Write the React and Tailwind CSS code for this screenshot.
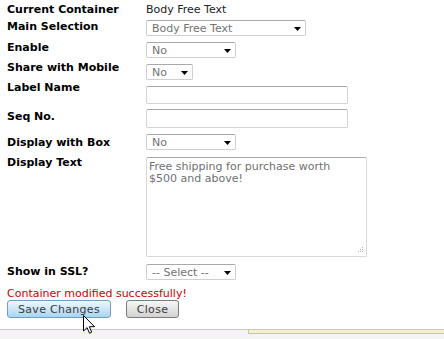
import React from 'react';

const Arrow = () => (
  <svg width="7" height="4" viewBox="0 0 7 4" className="shrink-0 mt-[2px]">
    <path d="M0 0h7L3.5 4z" fill="#000" />
  </svg>
);

const FakeSelect = ({ value, width }) => (
  <div
    className={`box-border h-[16px] ${width} flex items-center justify-between pl-[5px] pr-[4px] bg-white rounded-[2px] border border-[#cfcfcf] border-t-[#a9a9a9] text-[#737373] text-[11px] leading-[14px]`}
  >
    <span className="pt-[2px] whitespace-nowrap">{value}</span>
    <Arrow />
  </div>
);

const TextBox = ({ h }) => (
  <div className={`box-border w-[202px] ${h} bg-white rounded-[2px] border border-[#d4d4d4] border-t-[#a9a9a9]`} />
);

const Row = ({ label, h, lp, cp, children }) => (
  <div className={`flex ${h}`}>
    <div className={`w-[139px] shrink-0 font-bold text-black leading-[16px] ${lp}`}>{label}</div>
    <div className={cp}>{children}</div>
  </div>
);

const Grip = () => (
  <svg width="6" height="6" viewBox="0 0 6 6" className="absolute right-[3px] bottom-[3px]">
    <g fill="#b5b5b5">
      <rect x="5" y="0" width="1" height="1" />
      <rect x="3" y="2" width="1" height="1" />
      <rect x="5" y="2" width="1" height="1" />
      <rect x="1" y="4" width="1" height="1" />
      <rect x="3" y="4" width="1" height="1" />
      <rect x="5" y="4" width="1" height="1" />
    </g>
  </svg>
);

const Cursor = () => (
  <svg width="12" height="19" viewBox="0 0 12 19" className="absolute left-[83px] top-[315px]">
    <path
      d="M0.5 0.5v15.5l3.6-3.4 2.4 5.6 2.2-1-2.4-5.5h5.2z"
      fill="#fff"
      stroke="#000"
      strokeWidth="1"
      strokeLinejoin="miter"
    />
  </svg>
);

export default function App() {
  return (
    <div className="relative w-[444px] h-[339px] overflow-hidden bg-white text-[11px] font-['DejaVu_Sans','Verdana',sans-serif]">
      <div className="pl-[7px]">
        <Row label="Current Container" h="h-[18px]" lp="pt-[2px]" cp="pt-[2px] leading-[16px] text-[#222]">
          Body Free Text
        </Row>
        <Row label="Main Selection" h="h-[20px]" lp="pt-[1px]" cp="pt-[2px]">
          <FakeSelect value="Body Free Text" width="w-[160px]" />
        </Row>
        <Row label="Enable" h="h-[21px]" lp="pt-[2px]" cp="pt-[4px]">
          <FakeSelect value="No" width="w-[90px]" />
        </Row>
        <Row label="Share with Mobile" h="h-[20px]" lp="pt-[1px]" cp="pt-[5px]">
          <FakeSelect value="No" width="w-[47px]" />
        </Row>
        <Row label="Label Name" h="h-[28px]" lp="pt-[1px]" cp="pt-[7px]">
          <TextBox h="h-[18px]" />
        </Row>
        <Row label="Seq No." h="h-[26px]" lp="pt-[2px]" cp="pt-[2px]">
          <TextBox h="h-[19px]" />
        </Row>
        <Row label="Display with Box" h="h-[21px]" lp="pt-[2px]" cp="pt-[1px]">
          <FakeSelect value="No" width="w-[90px]" />
        </Row>
        <Row label="Display Text" h="h-[109px]" lp="pt-[1px]" cp="pt-[3px]">
          <div className="relative box-border w-[221px] h-[100px] bg-white rounded-[2px] border border-[#d8d8d8] border-t-[#a9a9a9] pl-[2px] pt-[3px] text-[#707070] leading-[12px]">
            Free shipping for purchase worth
            <br />
            $500 and above!
            <Grip />
          </div>
        </Row>
        <Row label="Show in SSL?" h="h-[22px]" lp="pt-[1px]" cp="pt-[1px]">
          <FakeSelect value="-- Select --" width="w-[90px]" />
        </Row>
        <div className="mt-[1px] h-[14px] leading-[14px] pt-[1px] text-[#cc0000]">Container modified successfully!</div>
        <div className="flex gap-[15px]">
          <button className="box-border w-[104px] h-[18px] rounded-[3px] border border-[#6f9ec6] bg-gradient-to-b from-[#eef8fe] to-[#a8d5f1] text-[#3a3a3a] text-[11px] leading-[14px] tracking-[0.3px] pt-[1px]">
            Save Changes
          </button>
          <button className="box-border w-[53px] h-[18px] rounded-[3px] border border-[#7c7c7c] bg-gradient-to-b from-[#f7f7f7] to-[#d2d2d2] text-[#3a3a3a] text-[11px] leading-[14px] tracking-[0.3px] pt-[1px]">
            Close
          </button>
        </div>
      </div>
      <div className="mt-[11px] h-[12px] border-t border-[#cfcf88] bg-[#f4f4f4]">
        <div className="ml-[248px] h-[4px] bg-[#f1f1d2] border-l border-b border-[#c9c980]" />
      </div>
      <Cursor />
    </div>
  );
}
